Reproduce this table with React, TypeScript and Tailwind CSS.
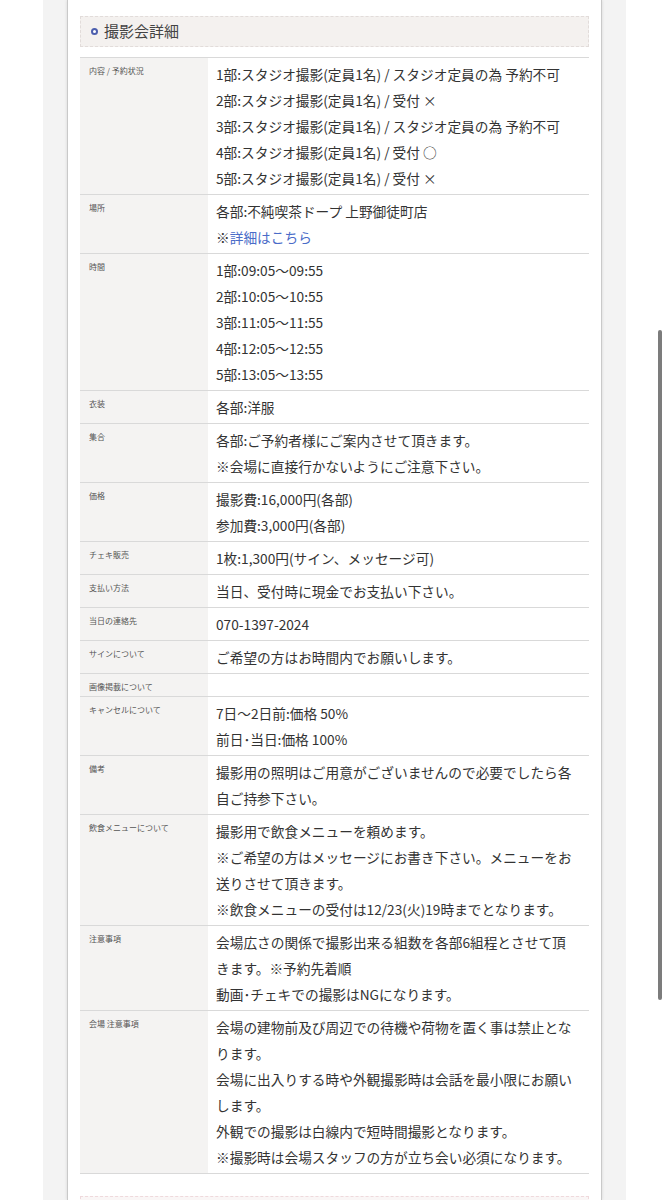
import React from "react";

type Row = { label: string; lines: React.ReactNode[] };

const rows: Row[] = [
  {
    label: "内容 / 予約状況",
    lines: [
      "1部:スタジオ撮影(定員1名) / スタジオ定員の為 予約不可",
      "2部:スタジオ撮影(定員1名) / 受付 ×",
      "3部:スタジオ撮影(定員1名) / スタジオ定員の為 予約不可",
      "4部:スタジオ撮影(定員1名) / 受付 ○",
      "5部:スタジオ撮影(定員1名) / 受付 ×",
    ],
  },
  {
    label: "場所",
    lines: [
      "各部:不純喫茶ドープ 上野御徒町店",
      <>
        ※<span className="text-[#4a6cc8]">詳細はこちら</span>
      </>,
    ],
  },
  {
    label: "時間",
    lines: [
      "1部:09:05〜09:55",
      "2部:10:05〜10:55",
      "3部:11:05〜11:55",
      "4部:12:05〜12:55",
      "5部:13:05〜13:55",
    ],
  },
  { label: "衣装", lines: ["各部:洋服"] },
  {
    label: "集合",
    lines: ["各部:ご予約者様にご案内させて頂きます。", "※会場に直接行かないようにご注意下さい。"],
  },
  { label: "価格", lines: ["撮影費:16,000円(各部)", "参加費:3,000円(各部)"] },
  { label: "チェキ販売", lines: ["1枚:1,300円(サイン、メッセージ可)"] },
  { label: "支払い方法", lines: ["当日、受付時に現金でお支払い下さい。"] },
  { label: "当日の連絡先", lines: ["070-1397-2024"] },
  { label: "サインについて", lines: ["ご希望の方はお時間内でお願いします。"] },
  { label: "画像掲載について", lines: [] },
  { label: "キャンセルについて", lines: ["7日〜2日前:価格 50%", "前日･当日:価格 100%"] },
  {
    label: "備考",
    lines: ["撮影用の照明はご用意がございませんので必要でしたら各自ご持参下さい。"],
  },
  {
    label: "飲食メニューについて",
    lines: [
      "撮影用で飲食メニューを頼めます。",
      "※ご希望の方はメッセージにお書き下さい。メニューをお送りさせて頂きます。",
      "※飲食メニューの受付は12/23(火)19時までとなります。",
    ],
  },
  {
    label: "注意事項",
    lines: [
      "会場広さの関係で撮影出来る組数を各部6組程とさせて頂きます。※予約先着順",
      "動画･チェキでの撮影はNGになります。",
    ],
  },
  {
    label: "会場 注意事項",
    lines: [
      "会場の建物前及び周辺での待機や荷物を置く事は禁止となります。",
      "会場に出入りする時や外観撮影時は会話を最小限にお願いします。",
      "外観での撮影は白線内で短時間撮影となります。",
      "※撮影時は会場スタッフの方が立ち会い必須になります。",
    ],
  },
];

const DetailRow = ({ label, lines }: Row) => {
  return (
    <div className="flex border-b border-[#d9d9d9]">
      <div className="w-[128px] shrink-0 bg-[#f4f3f2] pl-[9px] pt-[8px] pb-[4px] text-[8px] leading-[10px] text-[#555]">
        {label}
      </div>
      <div className="flex-1 bg-white pl-[8px] pr-[10px] py-[3px] text-[13.7px] leading-[26px] text-[#333]">
        {lines.map((l, i) => (
          <p key={i}>{l}</p>
        ))}
      </div>
    </div>
  );
};

export default function App() {
  return (
    <div className="relative h-[1200px] overflow-hidden bg-white font-['Noto_Sans_CJK_JP','Noto_Sans',sans-serif]">
      <div className="ml-[43px] w-[583px] h-full bg-[#f3f3f3] px-[24px]">
        <div className="h-full bg-white border-x border-[#c9c9c9] px-[12px] pt-[16px] shadow-[0_0_3px_rgba(0,0,0,0.12)]">
          <div className="flex h-[31px] items-center gap-[6px] border border-dashed border-[#e2dcda] bg-[#f4f1ef] pl-[10px]">
            <span className="h-[7px] w-[7px] rounded-full border-2 border-[#4d5fae] bg-white" />
            <span className="text-[15px] text-[#444]">撮影会詳細</span>
          </div>

          <div className="mt-[10px] border-t border-[#d9d9d9]">
            {rows.map((r) => (
              <DetailRow key={r.label} {...r} />
            ))}
          </div>

          <div className="mt-[22px] h-[31px] border border-dashed border-[#efd9dc] bg-[#faf6f6]" />
        </div>
      </div>

      {/* iOS scroll indicator */}
      <div className="absolute left-[658px] top-[330px] h-[670px] w-[4px] rounded-full bg-[#7c7c7c]" />
    </div>
  );
}
